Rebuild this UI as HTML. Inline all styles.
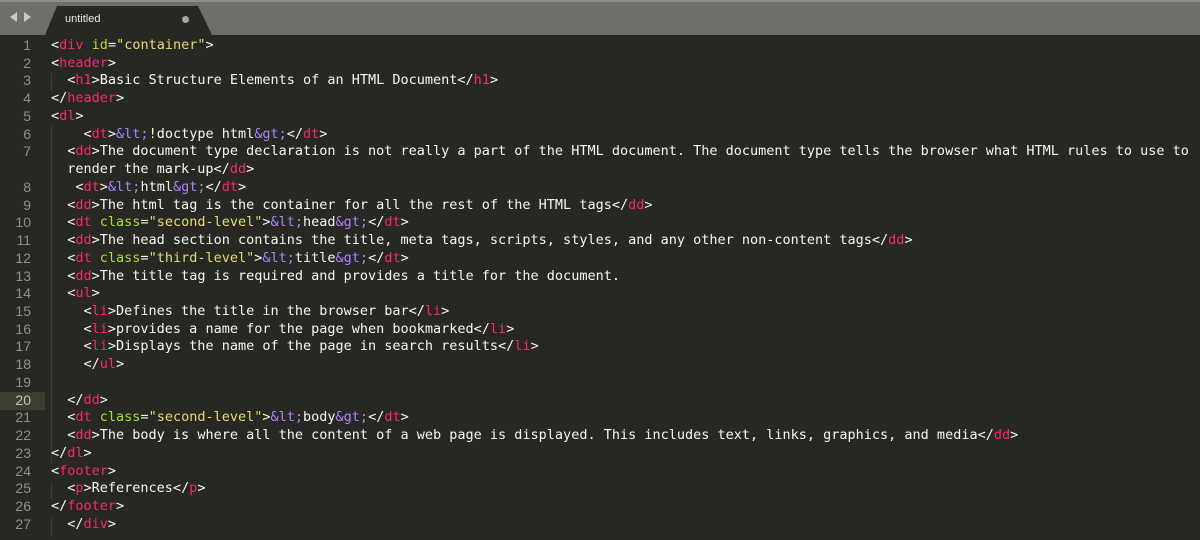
<!DOCTYPE html>
<html><head><meta charset="utf-8"><style>
html,body{margin:0;padding:0}
body{width:1200px;height:540px;background:#272822;position:relative;overflow:hidden;font-family:"Liberation Mono",monospace}
#bar{position:absolute;left:0;top:0;width:1200px;height:35px;background:#6e6f69;border-top:2px solid #8c8d88;box-sizing:border-box}
#tab{position:absolute;left:0;top:0}
.tt{position:absolute;left:65px;top:13px;font:11px "Liberation Sans",sans-serif;color:#e8e8e8}
.dot{position:absolute;left:182px;top:16px;width:7px;height:7px;border-radius:50%;background:#a5a5a5}
#g{position:absolute;left:0;top:37px;width:31px;text-align:right;color:#8f908a;font-family:"Liberation Sans",sans-serif;font-size:14px;line-height:17.74px}
#hl{position:absolute;left:0;top:392px;width:45px;height:17.74px;background:#3e3d32}
#c{position:absolute;left:51px;top:37px;color:#f8f8f2;font-size:13.5px;line-height:17.74px;white-space:pre;margin:0}
.t{color:#f92672}.a{color:#a6e22e}.s{color:#e6db74}.e{color:#ae81ff}
.ig{position:absolute;width:1px;background:#3b3c35}
</style></head><body>
<div id="bar"></div>
<svg id="tab" width="230" height="35"><polygon points="45,35 57,6 198,6 212,35" fill="#272822"/>
<polygon points="10,17 17,12 17,22" fill="#c9c9c6"/><polygon points="31,17 24,12 24,22" fill="#c9c9c6"/></svg>
<div class="tt">untitled</div><div class="dot"></div>
<div id="hl"></div>
<div class="ig" style="left:51px;top:73px;height:17px"></div>
<div class="ig" style="left:51px;top:126px;height:337px"></div>
<div class="ig" style="left:51px;top:482px;height:17px"></div>
<div class="ig" style="left:51px;top:517px;height:20px"></div>
<div id="g">1<br>2<br>3<br>4<br>5<br>6<br>7<br><br>8<br>9<br>10<br>11<br>12<br>13<br>14<br>15<br>16<br>17<br>18<br>19<br><span style="color:#c8c8c2">20</span><br>21<br>22<br>23<br>24<br>25<br>26<br>27</div>
<pre id="c">&lt;<span class="t">div</span> <span class="a">id</span>=<span class="s">"container"</span>&gt;
&lt;<span class="t">header</span>&gt;
  &lt;<span class="t">h1</span>&gt;Basic Structure Elements of an HTML Document&lt;/<span class="t">h1</span>&gt;
&lt;/<span class="t">header</span>&gt;
&lt;<span class="t">dl</span>&gt;
    &lt;<span class="t">dt</span>&gt;<span class="e">&amp;lt;</span>!doctype html<span class="e">&amp;gt;</span>&lt;/<span class="t">dt</span>&gt;
  &lt;<span class="t">dd</span>&gt;The document type declaration is not really a part of the HTML document. The document type tells the browser what HTML rules to use to
  render the mark-up&lt;/<span class="t">dd</span>&gt;
   &lt;<span class="t">dt</span>&gt;<span class="e">&amp;lt;</span>html<span class="e">&amp;gt;</span>&lt;/<span class="t">dt</span>&gt;
  &lt;<span class="t">dd</span>&gt;The html tag is the container for all the rest of the HTML tags&lt;/<span class="t">dd</span>&gt;
  &lt;<span class="t">dt</span> <span class="a">class</span>=<span class="s">"second-level"</span>&gt;<span class="e">&amp;lt;</span>head<span class="e">&amp;gt;</span>&lt;/<span class="t">dt</span>&gt;
  &lt;<span class="t">dd</span>&gt;The head section contains the title, meta tags, scripts, styles, and any other non-content tags&lt;/<span class="t">dd</span>&gt;
  &lt;<span class="t">dt</span> <span class="a">class</span>=<span class="s">"third-level"</span>&gt;<span class="e">&amp;lt;</span>title<span class="e">&amp;gt;</span>&lt;/<span class="t">dt</span>&gt;
  &lt;<span class="t">dd</span>&gt;The title tag is required and provides a title for the document.
  &lt;<span class="t">ul</span>&gt;
    &lt;<span class="t">li</span>&gt;Defines the title in the browser bar&lt;/<span class="t">li</span>&gt;
    &lt;<span class="t">li</span>&gt;provides a name for the page when bookmarked&lt;/<span class="t">li</span>&gt;
    &lt;<span class="t">li</span>&gt;Displays the name of the page in search results&lt;/<span class="t">li</span>&gt;
    &lt;/<span class="t">ul</span>&gt;

  &lt;/<span class="t">dd</span>&gt;
  &lt;<span class="t">dt</span> <span class="a">class</span>=<span class="s">"second-level"</span>&gt;<span class="e">&amp;lt;</span>body<span class="e">&amp;gt;</span>&lt;/<span class="t">dt</span>&gt;
  &lt;<span class="t">dd</span>&gt;The body is where all the content of a web page is displayed. This includes text, links, graphics, and media&lt;/<span class="t">dd</span>&gt;
&lt;/<span class="t">dl</span>&gt;
&lt;<span class="t">footer</span>&gt;
  &lt;<span class="t">p</span>&gt;References&lt;/<span class="t">p</span>&gt;
&lt;/<span class="t">footer</span>&gt;
  &lt;/<span class="t">div</span>&gt;</pre>
</body></html>
